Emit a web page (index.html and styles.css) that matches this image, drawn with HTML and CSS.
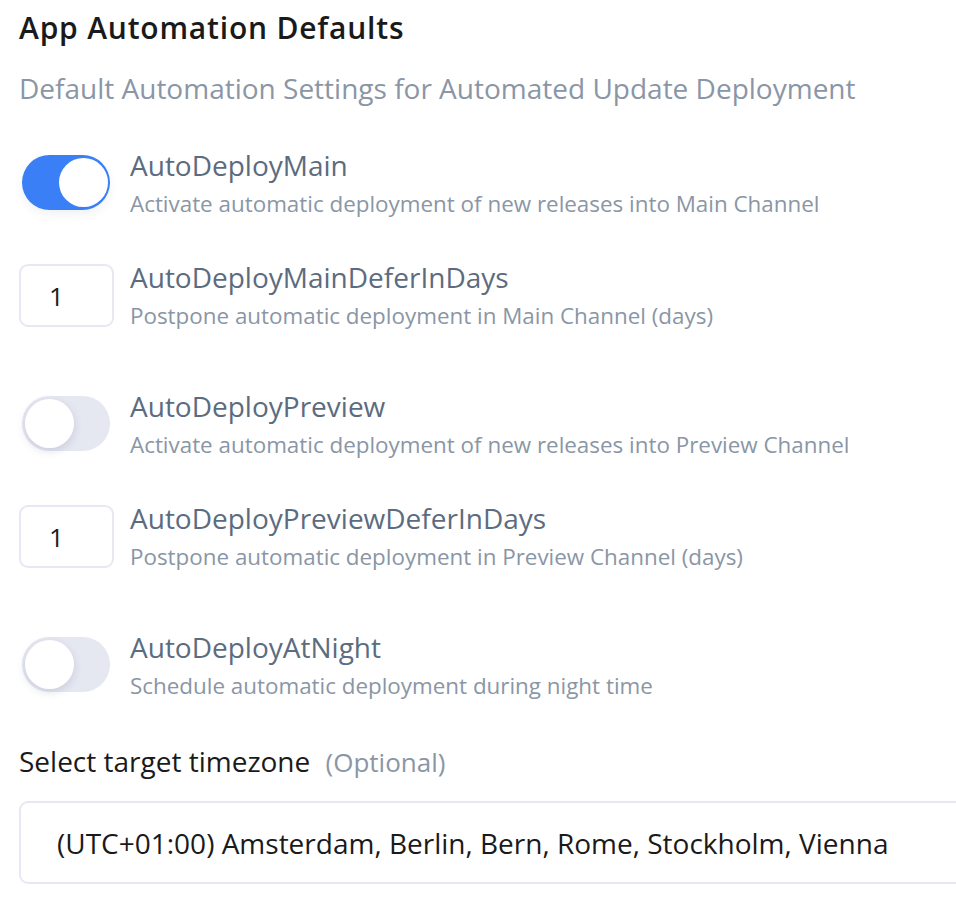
FILE: index.html
```html
<!DOCTYPE html>
<html lang="en">
<head>
<meta charset="utf-8">
<title>App Automation Defaults</title>
<link rel="stylesheet" href="styles.css">
</head>
<body>
<main class="page">
  <h1 class="title">App Automation Defaults</h1>
  <p class="subtitle">Default Automation Settings for Automated Update Deployment</p>

  <div class="settings">
    <div class="setting setting-toggle">
      <div class="control"><span class="toggle on"><span class="knob"></span></span></div>
      <div class="text">
        <div class="label">AutoDeployMain</div>
        <div class="desc">Activate automatic deployment of new releases into Main Channel</div>
      </div>
    </div>

    <div class="setting setting-number">
      <div class="control"><span class="number">1</span></div>
      <div class="text">
        <div class="label">AutoDeployMainDeferInDays</div>
        <div class="desc">Postpone automatic deployment in Main Channel (days)</div>
      </div>
    </div>

    <div class="setting setting-toggle">
      <div class="control"><span class="toggle"><span class="knob"></span></span></div>
      <div class="text">
        <div class="label">AutoDeployPreview</div>
        <div class="desc">Activate automatic deployment of new releases into Preview Channel</div>
      </div>
    </div>

    <div class="setting setting-number">
      <div class="control"><span class="number">1</span></div>
      <div class="text">
        <div class="label">AutoDeployPreviewDeferInDays</div>
        <div class="desc">Postpone automatic deployment in Preview Channel (days)</div>
      </div>
    </div>

    <div class="setting setting-toggle">
      <div class="control"><span class="toggle"><span class="knob"></span></span></div>
      <div class="text">
        <div class="label">AutoDeployAtNight</div>
        <div class="desc">Schedule automatic deployment during night time</div>
      </div>
    </div>
  </div>

  <div class="field">
    <div class="field-label">Select target timezone <span class="optional">(Optional)</span></div>
    <div class="select">(UTC+01:00) Amsterdam, Berlin, Bern, Rome, Stockholm, Vienna</div>
  </div>
</main>
</body>
</html>
```

FILE: styles.css
```css
html, body {
  margin: 0;
  padding: 0;
  overflow: hidden;
  background: #ffffff;
}

body {
  font-family: "Open Sans", "Noto Sans", sans-serif;
  color: #1c1c1c;
}

.page {
  padding: 7px 0 0 19px;
}

.title {
  margin: 0;
  font-size: 30px;
  font-weight: 600;
  line-height: 42px;
  letter-spacing: 0.8px;
  color: #1a1a1a;
}

.subtitle {
  margin: 19px 0 0;
  font-size: 28px;
  font-weight: 400;
  line-height: 40px;
  color: #8a96a6;
}

.settings {
  margin-top: 40px;
}

.setting {
  display: flex;
  align-items: flex-start;
}

.setting-toggle {
  margin-bottom: 41px;
}

.setting-number {
  margin-bottom: 58px;
}

.setting:last-child {
  margin-bottom: 0;
}

.control {
  width: 111px;
  flex: none;
}

.toggle {
  display: block;
  margin: 7px 0 0 3px;
  width: 88px;
  height: 55px;
  border-radius: 28px;
  background: #e5e7f1;
  position: relative;
}

.toggle .knob {
  position: absolute;
  top: 3px;
  left: 3px;
  width: 49px;
  height: 49px;
  border-radius: 50%;
  background: #ffffff;
  box-shadow: 0 3px 8px rgba(60, 70, 110, 0.16);
}

.toggle.on {
  background: #3a7ff6;
  box-shadow: 0 4px 10px rgba(60, 80, 120, 0.08);
}

.toggle.on .knob {
  left: auto;
  right: 2px;
  box-shadow: none;
}

.number {
  display: flex;
  align-items: center;
  box-sizing: border-box;
  margin-top: 4px;
  width: 95px;
  height: 63px;
  padding-left: 28px;
  border: 2px solid #e6e9f4;
  border-radius: 9px;
  font-size: 26px;
  color: #1a1a1a;
}

.label {
  font-size: 28px;
  line-height: 34px;
  color: #5c6c80;
}

.desc {
  margin-top: 7px;
  font-size: 22.4px;
  line-height: 30px;
  color: #8a96a5;
}

.field {
  margin-top: 41px;
}

.field-label {
  font-size: 28px;
  line-height: 38px;
  color: #1a1a1a;
}

.optional {
  margin-left: 8px;
  font-size: 26px;
  color: #8a96a5;
}

.select {
  margin-top: 20px;
  box-sizing: border-box;
  width: 960px;
  height: 83px;
  display: flex;
  align-items: center;
  padding-left: 36px;
  border: 2px solid #e6e9f4;
  border-radius: 9px;
  font-size: 28px;
  color: #1a1a1a;
}
```
